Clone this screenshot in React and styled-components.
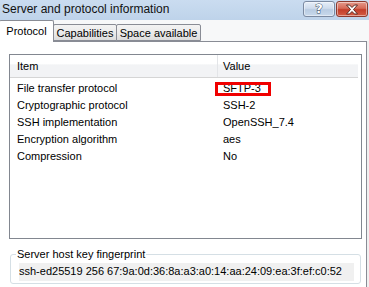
import React from 'react';
import styled, { createGlobalStyle } from 'styled-components';

const Global = createGlobalStyle`
  html, body { margin: 0; padding: 0; background: #f0f0f0; }
  body { width: 369px; height: 287px; overflow: hidden; font-family: "Liberation Sans", Arial, sans-serif; }
  * { box-sizing: border-box; }
`;

const Window = styled.div`
  width: 369px;
  height: 287px;
  display: flex;
  flex-direction: column;
  background: #f0f0f0;
  overflow: hidden;
`;

const TitleBar = styled.div`
  height: 20px;
  flex: none;
  display: flex;
  align-items: flex-start;
  padding: 1px 1px 0 2px;
  background: linear-gradient(#cadcf0, #bed3ea);
`;

const Title = styled.div`
  flex: 1;
  font-family: "Liberation Sans", Arial, sans-serif;
  font-size: 12px;
  line-height: 17px;
  color: #111;
  white-space: nowrap;
`;

const CaptionButton = styled.div`
  width: ${p => (p.$close ? 32 : 32)}px;
  height: 16px;
  margin-left: ${p => (p.$close ? 1 : 0)}px;
  border: 1px solid ${p => (p.$close ? '#8c3a2f' : '#7b8aa1')};
  border-radius: 3px;
  display: flex;
  align-items: center;
  justify-content: center;
  background: ${p =>
    p.$close
      ? 'linear-gradient(#e59a8c 0%, #d66a57 45%, #c33e2a 55%, #d35b44 100%)'
      : 'linear-gradient(#e6eef8 0%, #cfdcec 45%, #b9cce2 55%, #c8d9ec 100%)'};
  box-shadow: inset 0 0 0 1px rgba(255, 255, 255, 0.45);
`;

const HelpGlyph = styled.span`
  font-family: "DejaVu Sans", sans-serif;
  font-weight: bold;
  font-size: 13px;
  line-height: 14px;
  color: #fff;
  -webkit-text-stroke: 1px #3c4c64;
  paint-order: stroke fill;
`;

const TabStrip = styled.div`
  height: 21px;
  flex: none;
  display: flex;
  align-items: flex-end;
  background: #f7f8f9;
  position: relative;
  z-index: 1;
`;

const Tab = styled.div`
  height: ${p => (p.$active ? 22 : 17)}px;
  margin-left: -1px;
  margin-bottom: ${p => (p.$active ? -1 : 0)}px;
  padding-top: ${p => (p.$active ? 3 : 1)}px;
  width: ${p => p.$w}px;
  border: 1px solid #898c95;
  border-bottom: ${p => (p.$active ? 'none' : '1px solid #898c95')};
  border-radius: 2px 2px 0 0;
  background: ${p => (p.$active ? '#fff' : 'linear-gradient(#f3f3f3, #ebebeb 50%, #dcdcdc)')};
  font-family: "Liberation Sans", Arial, sans-serif;
  font-size: 11px;
  line-height: 14px;
  color: #000;
  text-align: center;
  white-space: nowrap;
  z-index: ${p => (p.$active ? 2 : 1)};
`;

const Page = styled.div`
  flex: 1;
  margin-left: -1px;
  width: 368px;
  background: #fff;
  border: 1px solid #898c95;
  border-bottom: none;
  padding: 12px 4px 0 9px;
  display: flex;
  flex-direction: column;
`;

const ListView = styled.div`
  height: 185px;
  flex: none;
  border: 1px solid #828790;
  display: flex;
  flex-direction: column;
`;

const Header = styled.div`
  height: 23px;
  display: grid;
  grid-template-columns: 207px 1fr;
  margin-right: 3px;
  background: linear-gradient(#ffffff 0%, #ffffff 40%, #f2f3f5 45%, #f2f3f5 100%);
  border-bottom: 1px solid #d5d5d5;
`;

const HeaderCell = styled.div`
  padding-left: ${p => p.$pad}px;
  font-size: 11px;
  line-height: 22px;
  color: #000;
  border-left: ${p => (p.$sep ? '1px solid #e3e5e8' : 'none')};
`;

const Rows = styled.div`
  padding-top: 2px;
  display: flex;
  flex-direction: column;
`;

const Row = styled.div`
  height: 17px;
  display: grid;
  grid-template-columns: 206px 1fr;
  font-size: 11px;
  line-height: 17px;
  color: #000;
`;

const Cell = styled.div`
  padding-left: 7px;
  white-space: nowrap;
  position: relative;
`;

const Highlight = styled.div`
  position: absolute;
  left: -1px;
  top: 2px;
  width: 56px;
  height: 14px;
  border: 3px solid #f00000;
`;

const Group = styled.fieldset`
  margin: 9px 1px 0 1px;
  width: 351px;
  border: 1px solid #d5dfe5;
  border-radius: 3px;
  padding: 2px 6px 2px 8px;
  display: flex;
  flex-direction: column;
`;

const Legend = styled.legend`
  padding: 0 1px;
  margin-left: -3px;
  font-size: 11px;
  line-height: 13px;
  color: #000;
`;

const Field = styled.div`
  height: 18px;
  background: #f0f0f0;
  font-size: 11px;
  line-height: 17px;
  color: #000;
  white-space: nowrap;
  overflow: hidden;
`;

const rows = [
  ['File transfer protocol', 'SFTP-3', true],
  ['Cryptographic protocol', 'SSH-2'],
  ['SSH implementation', 'OpenSSH_7.4'],
  ['Encryption algorithm', 'aes'],
  ['Compression', 'No'],
];

export default function App() {
  return (
    <>
      <Global />
      <Window>
        <TitleBar>
          <Title>Server and protocol information</Title>
          <CaptionButton>
            <HelpGlyph>?</HelpGlyph>
          </CaptionButton>
          <CaptionButton $close>
            <svg width="14" height="11" viewBox="0 0 14 11">
              <path
                d="M1.5 1 L4.5 1 L7 3.5 L9.5 1 L12.5 1 L8.5 5.5 L12.5 10 L9.5 10 L7 7.5 L4.5 10 L1.5 10 L5.5 5.5 Z"
                fill="#fff"
                stroke="#5a2a22"
                strokeWidth="1"
                strokeLinejoin="round"
              />
            </svg>
          </CaptionButton>
        </TitleBar>
        <TabStrip>
          <Tab $active $w={55}>Protocol</Tab>
          <Tab $w={64}>Capabilities</Tab>
          <Tab $w={85}>Space available</Tab>
        </TabStrip>
        <Page>
          <ListView>
            <Header>
              <HeaderCell $pad={7}>Item</HeaderCell>
              <HeaderCell $pad={5} $sep>Value</HeaderCell>
            </Header>
            <Rows>
              {rows.map(([k, v, hl]) => (
                <Row key={k}>
                  <Cell>{k}</Cell>
                  <Cell>
                    {hl && <Highlight />}
                    {v}
                  </Cell>
                </Row>
              ))}
            </Rows>
          </ListView>
          <Group>
            <Legend>Server host key fingerprint</Legend>
            <Field>ssh-ed25519 256 67:9a:0d:36:8a:a3:a0:14:aa:24:09:ea:3f:ef:c0:52</Field>
          </Group>
        </Page>
      </Window>
    </>
  );
}
